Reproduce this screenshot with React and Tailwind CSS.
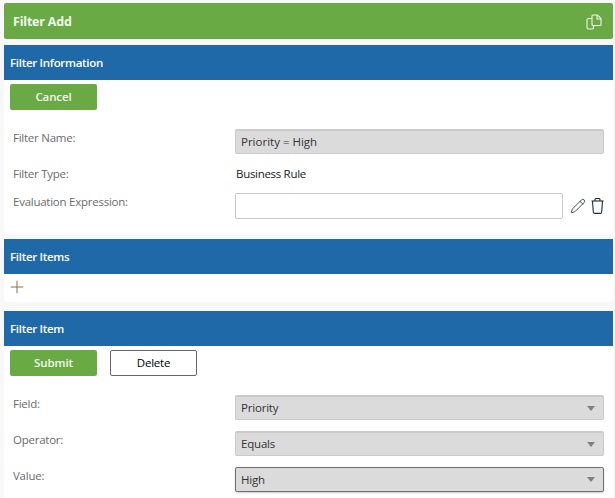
import { Pencil, Plus } from 'lucide-react';

const font = { fontFamily: '"Open Sans", sans-serif' };

const SectionHeader = ({ title }) => (
  <div className="h-[35px] bg-[#1f69a8] pl-[6px] pt-[1px] flex items-center text-[11.5px] font-semibold tracking-[-0.3px] text-white">{title}</div>
);

const Label = ({ children, className = '' }) => (
  <div className={`w-[225px] shrink-0 pl-[3px] text-[11.5px] tracking-[-0.25px] text-[#6b6b6b] ${className}`}>{children}</div>
);

const SelectBox = ({ value, focused }) => (
  <div className={`w-[369px] h-[25px] rounded-[2px] bg-[#dbdbdb] border flex items-center justify-between pl-[5px] pr-[8px] text-[11.5px] tracking-[-0.2px] text-[#333] ${focused ? 'border-[#707070] shadow-[0_1px_2px_rgba(0,0,0,0.2)]' : 'border-[#cacaca] border-t-2'}`}>
    <span>{value}</span>
    <span className="w-0 h-0 border-x-[4px] border-x-transparent border-t-[5px] border-t-[#808080]" />
  </div>
);

const SelectRow = ({ label, value, focused }) => (
  <div className="flex items-start">
    <Label>{label}</Label>
    <SelectBox value={value} focused={focused} />
  </div>
);

const App = () => {
  return (
    <div className="w-[615px] h-[498px] overflow-hidden bg-[#f8f8f8] px-[4px] pt-[3px]" style={font}>
      <div className="w-[609px] h-[36px] rounded-[2px] bg-[#6aaa45] pl-[9px] pr-[11px] pt-[2px] flex items-center justify-between">
        <span className="text-[12.5px] font-bold tracking-[-0.2px] text-[#f2f7ee]">Filter Add</span>
        <svg width="16" height="16" viewBox="0 0 16 16" fill="none" stroke="#eef6e4" strokeWidth="1.1">
          <path d="M6 4.500H2.500a1.500 1.500 0 0 0-1.500 1.500V13.500a1.500 1.500 0 0 0 1.500 1.500H6a1.500 1.500 0 0 0 1.500-1.500V12" />
          <path d="M7 1h4.500L15 4.500V10.500a1 1 0 0 1-1 1H7a1 1 0 0 1-1-1V2a1 1 0 0 1 1-1z" />
          <path d="M11 1v4h4" />
        </svg>
      </div>

      <div className="w-[609px] mt-[6px] h-[189px] bg-white rounded-b-[4px]">
        <SectionHeader title="Filter Information" />
        <div className="flex pl-[6px] pt-[4px]">
          <button className="w-[87px] h-[26px] pb-[1px] rounded-[2px] bg-[#6aaa45] text-[11.5px] font-semibold tracking-[-0.1px] text-[#f2f7ee]">Cancel</button>
        </div>
        <div className="flex items-start mt-[19px] pl-[6px]">
          <Label>Filter Name:</Label>
          <div className="w-[369px] h-[25px] rounded-[2px] bg-[#dbdbdb] border border-[#cacaca] border-t-2 pl-[5px] flex items-center text-[11.5px] text-[#333]">Priority = High</div>
        </div>
        <div className="flex items-center mt-[11px] pl-[6px] h-[17px]">
          <Label>Filter Type:</Label>
          <span className="pl-[1px] text-[11.5px] tracking-[-0.3px] text-[#222]">Business Rule</span>
        </div>
        <div className="flex items-start mt-[11px] pl-[6px]">
          <Label>Evaluation Expression:</Label>
          <div className="w-[328px] h-[26px] rounded-[2px] bg-white border border-[#c8c8c8]" />
          <div className="flex items-center gap-[5px] ml-[7px] mt-[5px] text-[#1f2a3a]">
            <Pencil size={16} strokeWidth={1.25} />
            <svg width="13" height="16" viewBox="0 0 13 16" fill="none" stroke="currentColor" strokeWidth="1.1">
              <path d="M0.500 3h12" />
              <path d="M4 3V1.500a1 1 0 0 1 1-1h3a1 1 0 0 1 1 1V3" />
              <path d="M1.500 3l0.800 11a1.500 1.500 0 0 0 1.500 1.400h5.400a1.500 1.500 0 0 0 1.500-1.400L11.500 3" />
            </svg>
          </div>
        </div>
      </div>

      <div className="w-[609px] mt-[5px] h-[63px] bg-white rounded-b-[4px]">
        <SectionHeader title="Filter Items" />
        <div className="pl-[3px] pt-[3px] text-[#9a6b3f]">
          <Plus size={20} strokeWidth={1.2} />
        </div>
      </div>

      <div className="w-[609px] mt-[9px] h-[200px] bg-white">
        <SectionHeader title="Filter Item" />
        <div className="flex gap-[13px] pl-[6px] pt-[4px]">
          <button className="w-[87px] h-[26px] pb-[1px] rounded-[2px] bg-[#6aaa45] text-[11.5px] font-semibold tracking-[-0.1px] text-[#f2f7ee]">Submit</button>
          <button className="w-[87px] h-[26px] pb-[1px] rounded-[2px] bg-white border border-[#666] text-[11.5px] tracking-[-0.2px] text-black">Delete</button>
        </div>
        <div className="flex flex-col gap-[11px] mt-[19px] pl-[6px]">
          <SelectRow label="Field:" value="Priority" />
          <SelectRow label="Operator:" value="Equals" />
          <SelectRow label="Value:" value="High" focused />
        </div>
      </div>
    </div>
  );
};

export default App;
